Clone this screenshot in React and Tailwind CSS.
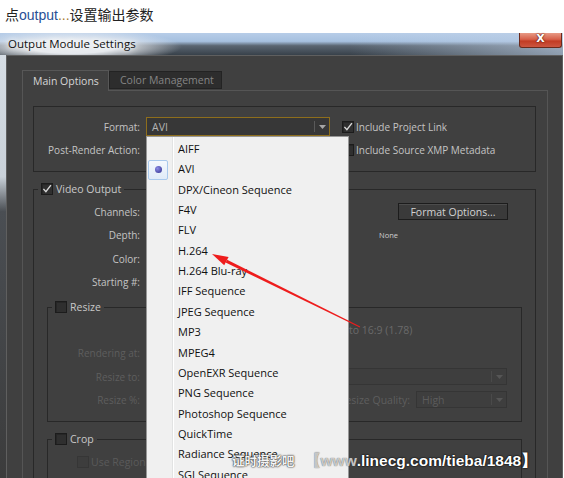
import React from "react";

const items = [
  "AIFF",
  "AVI",
  "DPX/Cineon Sequence",
  "F4V",
  "FLV",
  "H.264",
  "H.264 Blu-ray",
  "IFF Sequence",
  "JPEG Sequence",
  "MP3",
  "MPEG4",
  "OpenEXR Sequence",
  "PNG Sequence",
  "Photoshop Sequence",
  "QuickTime",
  "Radiance Sequence",
  "SGI Sequence",
  "Targa Sequence",
];

function Check({ checked, dim }) {
  return (
    <span
      className={
        "flex h-[12px] w-[12px] shrink-0 items-center justify-center border " +
        (dim
          ? "border-[#363636] bg-[#3d3d3d]"
          : "border-[#1c1c1c] bg-[#2f2f2f] shadow-[inset_1px_1px_0_#262626]")
      }
    >
      {checked && (
        <svg width="10" height="10" viewBox="0 0 10 10">
          <path d="M1.4 4.9 L3.9 7.7 L8.9 1.1" fill="none" stroke="#d8d8d8" strokeWidth="1.4" />
        </svg>
      )}
    </span>
  );
}

function Caret({ dim }) {
  return (
    <svg width="7" height="4" viewBox="0 0 7 4">
      <path d="M0 0 H7 L3.5 4 Z" fill={dim ? "#565656" : "#a6a6a6"} />
    </svg>
  );
}

function Select({ value, dim, gold, className }) {
  return (
    <div
      className={
        "flex items-center border " +
        (gold
          ? "border-[#8e6e1c] bg-[#373737] text-[#b4b4b4] "
          : dim
          ? "border-[#353535] bg-[#3e3e3e] text-[#5c5c5c] "
          : "border-[#262626] bg-[#373737] text-[#b4b4b4] ") +
        className
      }
    >
      <span className="flex-1 whitespace-nowrap pl-[5px] leading-[14px]">{value}</span>
      <span className={"h-[11px] w-px " + (dim ? "bg-[#4a4a4a]" : "bg-[#5a5a5a]")} />
      <span className="flex w-[14px] justify-center">
        <Caret dim={dim} />
      </span>
    </div>
  );
}

function Label({ w, dim, children }) {
  return (
    <span className={"shrink-0 text-right " + w + (dim ? " text-[#5e5e5e]" : " text-[#c4c4c4]")}>
      {children}
    </span>
  );
}

export default function App() {
  return (
    <div className="relative h-[478px] w-[564px] overflow-hidden bg-white">
      {/* caption */}
      <div className="h-[33px] pl-[5px] pt-[5px] font-['Liberation_Sans','Noto_Sans_CJK_SC',sans-serif] text-[14px] leading-[20px] text-[#222]">
        点<span className="text-[#284f95]">output</span>
        <span className="text-[#a77a35]">...</span>设置输出参数
      </div>

      {/* window */}
      <div className="flex h-[445px] w-[563px] flex-col font-['Open_Sans',sans-serif]">
        {/* title bar */}
        <div className="flex h-[22px] shrink-0 items-start justify-between bg-[radial-gradient(ellipse_110px_17px_at_72px_62%,rgba(236,239,243,0.97)_40%,rgba(236,239,243,0)_100%),linear-gradient(to_right,rgba(0,0,0,0)_62%,rgba(190,208,230,0.65)_100%),linear-gradient(to_bottom,#b7cde8_0%,#a6c0df_38%,#5a6571_58%,#38414a_100%)]">
          <span className="pl-[8px] pt-[2px] text-[11.5px] leading-[18px] text-[#111] [text-shadow:0_0_5px_#fff,0_0_8px_#fff]">
            Output Module Settings
          </span>
          <div className="mr-[1px] flex h-[15px] w-[43px] items-start justify-center rounded-b-[3px] border border-t-0 border-[#6a2a1c] bg-[linear-gradient(to_bottom,#e89a86_0%,#d6604a_45%,#c23c24_58%,#cc5640_100%)]">
            <span className="font-['DejaVu_Sans',sans-serif] text-[11px] font-bold leading-[11px] text-white [text-shadow:0_0_1px_#5a1a10,0_0_2px_#5a1a10]">
              X
            </span>
          </div>
        </div>

        {/* body */}
        <div className="flex flex-1">
          <div className="w-[6px] shrink-0 bg-[linear-gradient(to_bottom,#d6dde4_0%,#c9d1d9_28%,#4a4e53_36%,#3b3b3b_100%)]" />
          <div className="flex-1 border-l border-t border-r border-[#5f5f5f] bg-[#404040] pl-[15px] pt-[14px] text-[10px] leading-none">
            {/* tabs */}
            <div className="flex h-[20px]">
              <div className="relative z-10 -mb-px flex h-[21px] w-[87px] items-center border border-b-0 border-[#575757] bg-[#404040] pl-[10px] text-[10.5px] text-[#d6d6d6]">
                Main Options
              </div>
              <div className="mt-[1px] flex h-[18px] w-[113px] items-center border border-[#232323] bg-[#2d2d2d] pl-[10px] text-[10.5px] text-[#858585]">
                Color Management
              </div>
            </div>

            {/* tab panel */}
            <div className="h-[400px] w-[526px] border border-[#555555] bg-[#404040] pl-[10px] pt-[15px]">
              {/* group 1 */}
              <div className="h-[66px] w-[503px] border border-[#282828] pt-[10px]">
                <div className="flex h-[19px] items-center">
                  <Label w="w-[106px]">Format:</Label>
                  <Select gold value="AVI" className="ml-[6px] h-[19px] w-[184px] text-[10.5px]" />
                  <span className="ml-[12px]">
                    <Check checked />
                  </span>
                  <span className="ml-[2px] text-[#c4c4c4]">Include Project Link</span>
                </div>
                <div className="mt-[4.5px] flex h-[19px] items-center">
                  <Label w="w-[106px]">Post-Render Action:</Label>
                  <Select value="" className="ml-[6px] h-[19px] w-[184px]" />
                  <span className="ml-[12px]">
                    <Check />
                  </span>
                  <span className="ml-[2px] text-[#c4c4c4]">Include Source XMP Metadata</span>
                </div>
              </div>

              {/* video output group */}
              <div className="mt-[17px] h-[320px] w-[503px] border border-[#282828]">
                <div className="-mt-[7px] ml-[4px] flex h-[12px] w-fit items-center gap-[3px] bg-[#404040] px-[3px] text-[#c8c8c8]">
                  <Check checked />
                  <span className="text-[10.5px]">Video Output</span>
                </div>

                <div className="mt-[5.33px] flex h-[23.33px] items-center">
                  <Label w="w-[106px]">Channels:</Label>
                  <button className="ml-auto mr-[27px] flex h-[17px] w-[110px] items-center justify-center border border-[#1c1c1c] bg-[#3a3a3a] text-[10.5px] text-[#d2d2d2] shadow-[inset_0_1px_0_#4c4c4c]">
                    Format Options...
                  </button>
                </div>
                <div className="flex h-[23.33px] items-center">
                  <Label w="w-[106px]">Depth:</Label>
                  <span className="ml-[239px] text-[7.5px] text-[#cfcfcf]">None</span>
                </div>
                <div className="flex h-[23.33px] items-center">
                  <Label w="w-[106px]">Color:</Label>
                </div>
                <div className="flex h-[23.33px] items-center">
                  <Label w="w-[106px]">Starting #:</Label>
                </div>

                {/* resize group */}
                <div className="mx-[13px] mt-[13.33px] border border-[#282828] pb-[9.33px]">
                  <div className="-mt-[7px] ml-[4px] flex h-[12px] w-fit items-center gap-[3px] bg-[#404040] px-[3px] text-[#c8c8c8]">
                    <Check />
                    <span className="text-[10.5px]">Resize</span>
                  </div>
                  <div className="mt-[5.33px] flex h-[23.33px] items-center text-[#6a6a6a]">
                    <div className="flex w-[298px] items-center justify-end gap-[4px]">
                      <Check dim />
                      <span>Lock Aspect Ratio</span>
                    </div>
                    <span className="ml-[3px] text-[10.5px]">to 16:9 (1.78)</span>
                  </div>
                  <div className="flex h-[23.33px] items-center">
                    <Label w="w-[92px]" dim>
                      Rendering at:
                    </Label>
                  </div>
                  <div className="flex h-[23.33px] items-center">
                    <Label w="w-[92px]" dim>
                      Resize to:
                    </Label>
                    <Select dim value="" className="ml-auto mr-[14px] h-[17px] w-[220px]" />
                  </div>
                  <div className="flex h-[23.33px] items-center">
                    <Label w="w-[92px]" dim>
                      Resize %:
                    </Label>
                    <span className="ml-auto text-[10.5px] text-[#5e5e5e]">Resize Quality:</span>
                    <Select dim value="High" className="ml-[6px] mr-[14px] h-[17px] w-[91px] text-[10.5px]" />
                  </div>
                </div>

                {/* crop group */}
                <div className="mx-[13px] mt-[17px] h-[80px] border border-[#282828]">
                  <div className="-mt-[7px] ml-[4px] flex h-[12px] w-fit items-center gap-[3px] bg-[#404040] px-[3px] text-[#c8c8c8]">
                    <Check />
                    <span className="text-[10.5px]">Crop</span>
                  </div>
                  <div className="mt-[5.33px] flex h-[23.33px] items-center pl-[29px] text-[#5a5a5a]">
                    <Check dim />
                    <span className="ml-[2px] text-[10.5px]">Use Region of Interest</span>
                  </div>
                </div>
              </div>
            </div>
          </div>
        </div>
      </div>

      {/* dropdown menu */}
      <div className="absolute left-[146px] top-[136px] h-[360px] w-[203px] border border-[#979797] bg-[linear-gradient(to_right,#f0f0f0_0px,#f0f0f0_25px,#e2e3e3_25px,#e2e3e3_26px,#ffffff_26px,#ffffff_27px,#f0f0f0_27px)] pt-[2px] font-['Open_Sans',sans-serif] text-[11px] text-[#111]">
        {items.map((it) => (
          <div key={it} className="flex h-[20.37px] items-center">
            <div className="flex w-[26px] shrink-0 items-center">
              {it === "AVI" && (
                <div className="ml-px flex h-[20px] w-[20px] items-center justify-center rounded-[2px] border border-[#a9c9ec] bg-[linear-gradient(to_bottom,#f4f8fd,#e0ebf8)]">
                  <span className="h-[7px] w-[7px] rounded-full bg-[radial-gradient(circle_at_35%_35%,#8c8ce6,#2e2e8c)]" />
                </div>
              )}
            </div>
            <span className="pl-[5px]">{it}</span>
          </div>
        ))}
      </div>

      {/* red arrow */}
      <svg className="pointer-events-none absolute left-0 top-0" width="564" height="478" viewBox="0 0 564 478">
        <polygon points="225.6,262.4 359.8,327.5 360.2,326.6 227.1,259.8" fill="#ee1c1c" />
        <polygon points="212,254 224.2,265.3 228.6,257.1" fill="#ee1c1c" />
      </svg>

      {/* watermark */}
      <div className="absolute left-[232px] top-[451px] flex items-center whitespace-nowrap">
        <span className="font-['Noto_Sans_CJK_SC',sans-serif] text-[12.5px] font-bold leading-[20px] text-[#f4f4f4] [text-shadow:0_0_1px_#222,0_0_2px_#222]">
          证时摄影吧
        </span>
        <span className="ml-[10px] font-['Liberation_Sans',sans-serif] text-[15.5px] font-bold leading-[20px] text-[#e8e8e8]/80 [text-shadow:0_0_1px_#444]">
          【www
        </span>
        <span className="font-['Liberation_Sans',sans-serif] text-[15.5px] font-bold leading-[20px] text-white [text-shadow:0_0_1px_#000,0_0_2px_#000]">
          .linecg.com/tieba/1848】
        </span>
      </div>
    </div>
  );
}
